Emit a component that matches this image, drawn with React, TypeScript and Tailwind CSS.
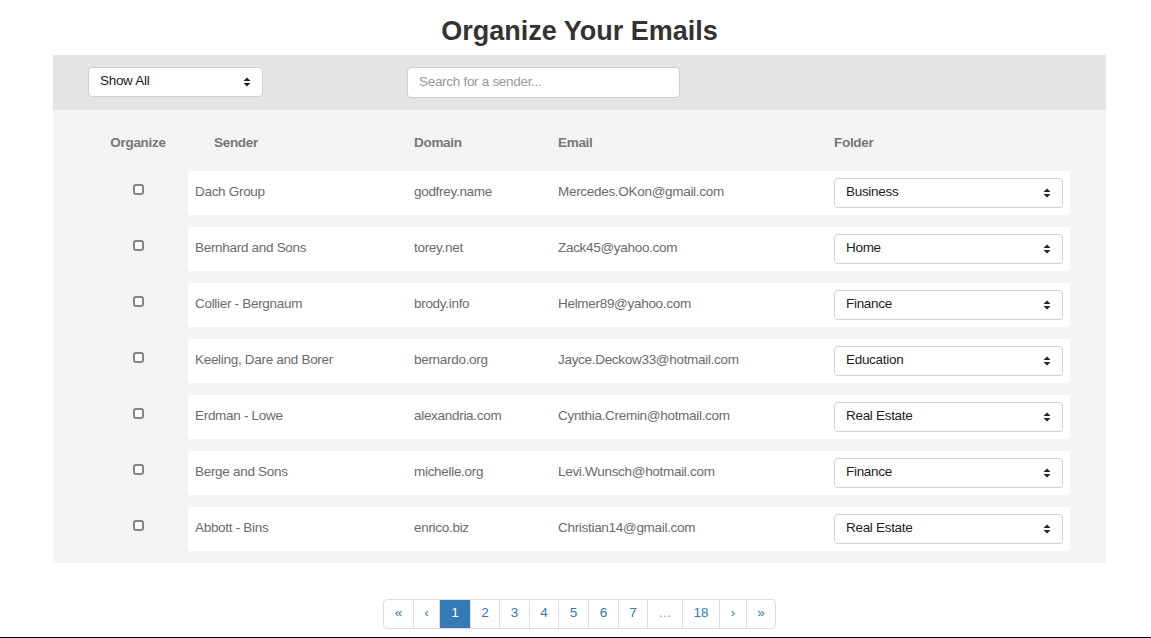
const rows = [
  { sender: 'Dach Group', domain: 'godfrey.name', email: 'Mercedes.OKon@gmail.com', folder: 'Business' },
  { sender: 'Bernhard and Sons', domain: 'torey.net', email: 'Zack45@yahoo.com', folder: 'Home' },
  { sender: 'Collier - Bergnaum', domain: 'brody.info', email: 'Helmer89@yahoo.com', folder: 'Finance' },
  { sender: 'Keeling, Dare and Borer', domain: 'bernardo.org', email: 'Jayce.Deckow33@hotmail.com', folder: 'Education' },
  { sender: 'Erdman - Lowe', domain: 'alexandria.com', email: 'Cynthia.Cremin@hotmail.com', folder: 'Real Estate' },
  { sender: 'Berge and Sons', domain: 'michelle.org', email: 'Levi.Wunsch@hotmail.com', folder: 'Finance' },
  { sender: 'Abbott - Bins', domain: 'enrico.biz', email: 'Christian14@gmail.com', folder: 'Real Estate' },
]

const pages = [
  { label: '«', w: 'w-[29px]' },
  { label: '‹', w: 'w-[26px]' },
  { label: '1', w: 'w-[31px]' },
  { label: '2', w: 'w-[29px]' },
  { label: '3', w: 'w-[30px]' },
  { label: '4', w: 'w-[29px]' },
  { label: '5', w: 'w-[30px]' },
  { label: '6', w: 'w-[30px]' },
  { label: '7', w: 'w-[29px]' },
  { label: '…', w: 'w-[35px]' },
  { label: '18', w: 'w-[37px]' },
  { label: '›', w: 'w-[27px]' },
  { label: '»', w: 'w-[29px]' },
]

const Arrows = () => (
  <svg width="8" height="10" viewBox="0 0 8 10" className="shrink-0">
    <path d="M4 0.5 L7.5 4 L0.5 4 Z" fill="#222" />
    <path d="M4 9.5 L7.5 6 L0.5 6 Z" fill="#222" />
  </svg>
)

const FakeSelect = ({ value, className }: { value: string; className: string }) => (
  <div
    className={`flex items-center justify-between h-[30px] bg-white border border-[#cfcfcf] rounded-[4px] pl-[11px] pr-[11px] text-[13.5px] tracking-[-0.3px] text-[#222] ${className}`}
  >
    <span className="pb-[2px]">{value}</span>
    <Arrows />
  </div>
)

const App = () => {
  return (
    <div
      className="h-[638px] border-b border-black bg-white overflow-hidden"
      style={{ fontFamily: '"Liberation Sans", Arial, sans-serif' }}
    >
      {/* title */}
      <h1 className="h-[55px] pt-[15px] pl-[8px] text-center text-[27px] leading-[32px] font-bold text-[#333]">
        Organize Your Emails
      </h1>

      <div className="ml-[53px] w-[1053px]">
        {/* filter bar */}
        <div className="flex h-[55px] items-start pt-[12px] pl-[35px] bg-[#e4e4e4]">
          <FakeSelect value="Show All" className="w-[175px]" />
          <div className="ml-[144px] w-[273px] h-[31px] bg-white border border-[#cfcfcf] rounded-[4px] pl-[11px] flex items-center text-[13.5px] tracking-[-0.3px] text-[#999]">
            Search for a sender...
          </div>
        </div>

        {/* table */}
        <div className="bg-[#f4f4f4] pl-[35px] pt-[23px] pb-[12px]">
          <div className="flex h-[38px] items-start text-[13.5px] tracking-[-0.3px] font-bold text-[#777]">
            <div className="w-[100px] text-center">Organize</div>
            <div className="w-[219px] pl-[26px]">Sender</div>
            <div className="w-[144px] pl-[7px]">Domain</div>
            <div className="w-[276px] pl-[7px]">Email</div>
            <div className="pl-[7px]">Folder</div>
          </div>

          <div className="flex flex-col gap-[12px]">
            {rows.map((r) => (
              <div key={r.email} className="flex items-center h-[44px] text-[13.5px] tracking-[-0.3px] text-[#6b6b6b]">
                <div className="w-[100px] flex justify-center pb-[8px]">
                  <div className="w-[11px] h-[11px] border-2 border-[#858585] rounded-[3px] bg-white" />
                </div>
                <div className="flex items-center h-full w-[882px] bg-white">
                  <div className="w-[219px] pl-[7px] pb-[2px]">{r.sender}</div>
                  <div className="w-[144px] pl-[7px] pb-[2px]">{r.domain}</div>
                  <div className="w-[276px] pl-[7px] pb-[2px]">{r.email}</div>
                  <div className="pl-[7px]">
                    <FakeSelect value={r.folder} className="w-[229px]" />
                  </div>
                </div>
              </div>
            ))}
          </div>
        </div>
      </div>

      {/* pagination */}
      <div className="flex justify-center mt-[36px] pl-[8px]">
        <div className="flex h-[30px] border border-[#ddd] rounded-[4px] overflow-hidden text-[13.5px]">
          {pages.map((p, i) => (
            <div
              key={i}
              className={`flex items-center justify-center pb-[2px] ${p.w} ${i > 0 ? 'border-l border-[#ddd]' : ''} ${
                p.label === '1'
                  ? 'bg-[#337ab7] text-white border-[#337ab7]'
                  : p.label === '…'
                    ? 'text-[#999]'
                    : 'text-[#337ab7]'
              }`}
            >
              {p.label}
            </div>
          ))}
        </div>
      </div>
    </div>
  )
}

export default App
